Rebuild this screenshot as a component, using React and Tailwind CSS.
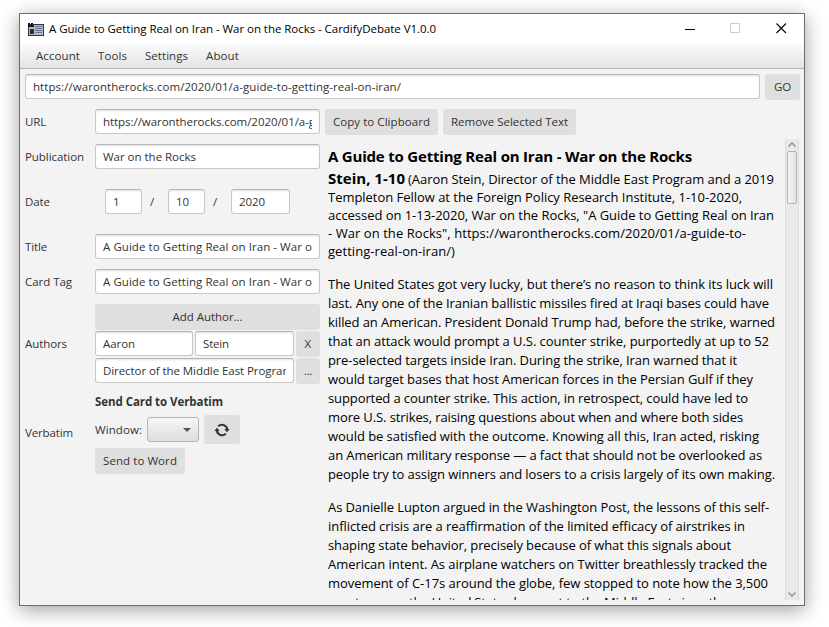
import { useLayoutEffect, useRef, useState } from "react";

// A single line of text whose tracking is adjusted so that it spans `w` pixels.
function Fit({ w, children, className = "" }) {
  const ref = useRef(null);
  const [ls, setLs] = useState(0);
  useLayoutEffect(() => {
    const el = ref.current;
    el.style.letterSpacing = "0px";
    const natural = el.getBoundingClientRect().width;
    setLs((w - natural) / children.length);
  }, [w, children]);
  return (
    <span ref={ref} className={`inline-block whitespace-pre ${className}`} style={{ letterSpacing: `${ls}px` }}>
      {children}
    </span>
  );
}

function Field({ w, className = "", children }) {
  return (
    <div className={`h-[25px] shrink-0 rounded-[3px] border border-[#c8c8c8] border-t-[#b5b5b5] bg-white px-[7px] shadow-[inset_0_2px_2px_-1px_rgba(0,0,0,0.12)] ${className}`}>
      <div className="h-full overflow-hidden leading-[23px]">
        <Fit w={w}>{children}</Fit>
      </div>
    </div>
  );
}

function Button({ w, className = "", children }) {
  return (
    <button className={`flex h-[26px] shrink-0 items-center justify-center rounded-[3px] bg-[#dfdfdf] ${className}`}>
      {w ? <Fit w={w}>{children}</Fit> : children}
    </button>
  );
}

function Row({ label, w, className = "", children }) {
  return (
    <div className={`flex items-center ${className}`}>
      <div className="w-[70px] shrink-0"><Fit w={w}>{label}</Fit></div>
      {children}
    </div>
  );
}

const intro = [
  [414, "Templeton Fellow at the Foreign Policy Research Institute, 1-10-2020,"],
  [446, "accessed on 1-13-2020, War on the Rocks, \"A Guide to Getting Real on Iran"],
  [418, "- War on the Rocks\", https://warontherocks.com/2020/01/a-guide-to-"],
  [127, "getting-real-on-iran/)"],
];

const first = [
  [445, "The United States got very lucky, but there’s no reason to think its luck will"],
  [441, "last. Any one of the Iranian ballistic missiles fired at Iraqi bases could have"],
  [447, "killed an American. President Donald Trump had, before the strike, warned"],
  [441, "that an attack would prompt a U.S. counter strike, purportedly at up to 52"],
  [409, "pre-selected targets inside Iran. During the strike, Iran warned that it"],
  [425, "would target bases that host American forces in the Persian Gulf if they"],
  [420, "supported a counter strike. This action, in retrospect, could have led to"],
  [415, "more U.S. strikes, raising questions about when and where both sides"],
  [431, "would be satisfied with the outcome. Knowing all this, Iran acted, risking"],
  [434, "an American military response — a fact that should not be overlooked as"],
  [447, "people try to assign winners and losers to a crisis largely of its own making."],
];

const second = [
  [441, "As Danielle Lupton argued in the Washington Post, the lessons of this self-"],
  [417, "inflicted crisis are a reaffirmation of the limited efficacy of airstrikes in"],
  [403, "shaping state behavior, precisely because of what this signals about"],
  [439, "American intent. As airplane watchers on Twitter breathlessly tracked the"],
  [440, "movement of C-17s around the globe, few stopped to note how the 3,500"],
  [400, "paratroopers the United States has sent to the Middle East since the"],
];

function Paragraph({ lines, className = "" }) {
  return (
    <div className={className}>
      {lines.map(([w, t]) => (
        <div key={t}><Fit w={w} className="align-top">{t}</Fit></div>
      ))}
    </div>
  );
}

function AppIcon() {
  return (
    <svg width="16" height="13" viewBox="0 0 16 13" shapeRendering="crispEdges">
      <rect x="0" y="1" width="16" height="12" fill="#26344c" />
      <rect x="6" y="2" width="9" height="10" fill="#b4bccb" />
      <rect x="1" y="4" width="5" height="8" fill="#b4bccb" />
      <rect x="2" y="6" width="4" height="5" fill="#2a2f3c" />
      <path d="M7 3.5h7M7 5.5h7M7 7.5h7M7 9.5h7" stroke="#6d788e" />
      <path d="M0 0h2v1h-1v1h1v2h-2zM3 0h2v1h-1v1h1v2h-2z" fill="#0d0d0d" />
    </svg>
  );
}

export default function App() {
  return (
    <div className="h-[627px] w-[829px] overflow-hidden bg-white pl-[19px] pt-[13px] font-['Open_Sans','Noto_Sans',sans-serif] text-[11.5px] text-[#333]">
      <div className="flex h-[593px] w-[786px] flex-col border border-[#6e6e6e] bg-[#f3f3f3] shadow-[0_4px_18px_rgba(0,0,0,0.38)]">
        <div className="flex h-[30px] shrink-0 items-center bg-white pl-2 text-black">
          <AppIcon />
          <Fit w={387} className="ml-[5px]">A Guide to Getting Real on Iran - War on the Rocks - CardifyDebate V1.0.0</Fit>
          <div className="ml-auto flex pr-[17px]">
            <svg width="102" height="11" viewBox="0 0 102 11" fill="none" className="-mt-px">
              <path d="M0 6.500h10" stroke="#000" />
              <path d="M45.500 .5h9v9h-9z" stroke="#ccc" />
              <path d="M91.500 .5l9.500 9.500M101 .5l-9.500 9.500" stroke="#000" strokeWidth="1.100" />
            </svg>
          </div>
        </div>
        <div className="flex h-[25px] shrink-0 items-center border-b border-[#b4b4b4] bg-gradient-to-b from-[#fbfbfb] to-[#e3e3e3] pl-4">
          <Fit w={44}>Account</Fit>
          <Fit w={29} className="ml-[18px]">Tools</Fit>
          <Fit w={43} className="ml-[18px]">Settings</Fit>
          <Fit w={33} className="ml-[18px]">About</Fit>
        </div>
        <div className="flex pl-[5px] pt-[5px]">
          <Field w={368} className="w-[735px]">https://warontherocks.com/2020/01/a-guide-to-getting-real-on-iran/</Field>
          <Button w={17} className="ml-[5px] w-[35px]">GO</Button>
        </div>
        <div className="flex min-h-0 flex-1 pl-[5px]">
          <div className="w-[295px] shrink-0 pt-[9px]">
            <Row label="URL" w={21}><Field w={212} className="w-[225px]">https://warontherocks.com/2020/01/a-g</Field></Row>
            <Row label="Publication" w={59} className="mt-[10px]"><Field w={93} className="w-[225px]">War on the Rocks</Field></Row>
            <Row label="Date" w={25} className="mt-5">
              <Field w={6} className="ml-[10px] w-[37px]">1</Field>
              <span className="w-[26px] pl-[8px]">/</span>
              <Field w={13} className="w-[37px]">10</Field>
              <span className="w-[26px] pl-[8px]">/</span>
              <Field w={26} className="w-[59px]">2020</Field>
            </Row>
            <Row label="Title" w={22} className="mt-5"><Field w={209} className="w-[225px]">A Guide to Getting Real on Iran - War o</Field></Row>
            <Row label="Card Tag" w={47} className="mt-[10px]"><Field w={209} className="w-[225px]">A Guide to Getting Real on Iran - War o</Field></Row>
            <Row label="Authors" w={42} className="mt-[10px]">
              <div className="flex flex-col gap-px">
                <Button w={70} className="w-[225px]">Add Author...</Button>
                <div className="flex h-[26px]">
                  <Field w={32} className="w-[98px]">Aaron</Field>
                  <Field w={26} className="ml-[2px] w-[99px]">Stein</Field>
                  <Button w={7} className="ml-[2px] w-6">X</Button>
                </div>
                <div className="flex h-[26px]">
                  <Field w={190} className="w-[199px]">Director of the Middle East Program</Field>
                  <Button w={8} className="ml-[2px] w-6">...</Button>
                </div>
              </div>
            </Row>
            <Row label="Verbatim" w={48} className="mt-2">
              <div>
                <div className="h-[23px] leading-[20px] font-bold"><Fit w={128}>Send Card to Verbatim</Fit></div>
                <div className="flex h-[29px] items-center">
                  <Fit w={47}>Window:</Fit>
                  <div className="ml-[5px] flex h-[25px] w-[52px] items-center justify-end rounded-[3px] border border-[#b5b5b5] bg-gradient-to-b from-[#f6f6f6] to-[#dedede] pr-[7px]">
                    <svg width="8" height="4" viewBox="0 0 8 4"><path d="M0 0h8L4 4z" fill="#555" /></svg>
                  </div>
                  <Button className="ml-[5px] h-[29px] w-9">
                    <svg width="16" height="14" viewBox="0 0 16 14" fill="none">
                      <path d="M4.200 3.400A5.200 5.200 0 0 1 13.200 7M11.800 10.600A5.200 5.200 0 0 1 2.800 7" stroke="#333" strokeWidth="2" />
                      <path d="M10.300 6h5.400L13 9.300zM.3 8h5.400L3 4.700z" fill="#333" />
                    </svg>
                  </Button>
                </div>
                <Button w={74} className="mt-1 w-[90px]">Send to Word</Button>
              </div>
            </Row>
          </div>
          <div className="flex min-w-0 flex-1 flex-col pl-[5px] pt-[9px]">
            <div className="flex gap-[5px]">
              <Button w={97} className="w-[113px]">Copy to Clipboard</Button>
              <Button w={117} className="w-[133px]">Remove Selected Text</Button>
            </div>
            <div className="mt-1 flex h-[461px]">
              <div className="w-[460px] shrink-0 overflow-hidden pl-[3px] pt-[6px] font-['Open_Sans','Noto_Sans',sans-serif] text-[13px] text-black">
                <div className="text-[15px] font-bold leading-[23px]"><Fit w={364}>A Guide to Getting Real on Iran - War on the Rocks</Fit></div>
                <div className="flex h-5 items-baseline leading-5">
                  <Fit w={77} className="text-[15px] font-bold">Stein, 1-10</Fit>
                  <Fit w={366} className="ml-[3px]">(Aaron Stein, Director of the Middle East Program and a 2019</Fit>
                </div>
                <Paragraph lines={intro} className="leading-[18px]" />
                <Paragraph lines={first} className="mt-[15px] leading-[19px]" />
                <Paragraph lines={second} className="mt-[14px] leading-[19px]" />
              </div>
              <div className="flex w-[14px] shrink-0 flex-col items-center justify-between border-x border-[#dcdcdc] bg-[#e9e9e9] pb-[3px] pt-[3px]">
                <div className="flex flex-col items-center">
                  <svg width="8" height="5" viewBox="0 0 8 5" fill="none"><path d="M.5 4.500L4 1l3.500 3.500" stroke="#8c8c8c" strokeWidth="1.300" /></svg>
                  <div className="mt-1 h-[53px] w-[10px] rounded-[2px] border border-[#b4b4b4] bg-gradient-to-r from-[#f6f6f6] to-[#e0e0e0]" />
                </div>
                <svg width="8" height="5" viewBox="0 0 8 5" fill="none"><path d="M.5 .5L4 4l3.500-3.500" stroke="#8c8c8c" strokeWidth="1.300" /></svg>
              </div>
            </div>
          </div>
        </div>
      </div>
    </div>
  );
}
